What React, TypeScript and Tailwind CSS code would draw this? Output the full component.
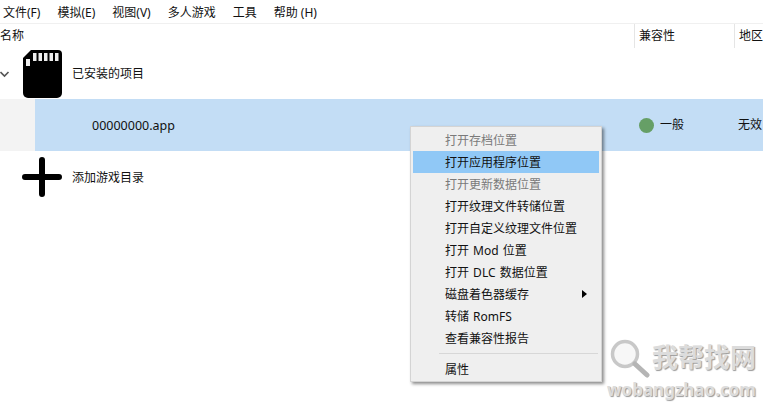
import React from "react";

const font = { fontFamily: '"Noto Sans", "Noto Sans CJK SC", sans-serif' };

function MenuItem({ label, disabled, active, arrow }: { label: string; disabled?: boolean; active?: boolean; arrow?: boolean }) {
  return (
    <div className={`relative mx-[2px] flex h-[22px] items-center pl-[32px] pt-[1px] text-[12px] leading-none [word-spacing:1px] ${disabled ? "text-[#7a7a7a]" : "text-[#111]"} ${active ? "bg-[#90c8f6]" : ""}`}>
      {label}
      {arrow && <span className="absolute left-[169px] top-[7px] h-0 w-0 border-y-[4px] border-l-[5px] border-y-transparent border-l-black" />}
    </div>
  );
}

export default function App() {
  return (
    <div className="relative h-[406px] w-[763px] overflow-hidden bg-white text-[12px] text-[#111]" style={font}>
      <div className="flex h-[24px] items-center gap-[17px] border-b border-[#f0f0f0] pl-[3px] pt-[3px]">
        <span>文件(F)</span>
        <span>模拟(E)</span>
        <span>视图(V)</span>
        <span>多人游戏</span>
        <span>工具</span>
        <span>帮助 (H)</span>
      </div>
      <div className="flex h-[24px] items-center">
        <span className="w-[634px]">名称</span>
        <span className="flex h-full w-[100px] items-center border-l border-[#e5e5e5] pl-[4px]">兼容性</span>
        <span className="flex h-full flex-1 items-center border-l border-[#e5e5e5] pl-[4px]">地区</span>
      </div>
      <div className="flex h-[51px] items-center">
        <svg width="12" height="12" viewBox="0 0 12 12" className="ml-[-1px]" fill="none" stroke="#555" strokeWidth="1.6">
          <path d="M1.5 4l4 4 4-4" />
        </svg>
        <svg width="40" height="48" viewBox="0 0 40 48" className="ml-[11px]">
          <path d="M9 0H36a4 4 0 0 1 4 4V43a5 5 0 0 1-5 5H6a5 5 0 0 1-5-5V8z" fill="#000" />
          <rect x="4" y="9" width="4" height="7" fill="#eee" />
          <rect x="11" y="3" width="3.5" height="8" fill="#eee" />
          <rect x="16.5" y="3" width="3.5" height="8" fill="#eee" />
          <rect x="22" y="3" width="3.5" height="8" fill="#eee" />
          <rect x="27.5" y="3" width="3.5" height="8" fill="#eee" />
          <rect x="33" y="3" width="3.5" height="8" fill="#eee" />
        </svg>
        <span className="ml-[10px]">已安装的项目</span>
      </div>
      <div className="flex h-[52px]">
        <div className="w-[35px] bg-[#f3f3f3]" />
        <div className="flex flex-1 items-center bg-[#c3ddf5]">
          <span className="ml-[57px] w-[543px] pt-[3px] text-[12.5px]">00000000.app</span>
          <span className="ml-[4px] h-[15px] w-[15px] rounded-full bg-[#669f66]" />
          <span className="ml-[6px] w-[78px]">一般</span>
          <span>无效</span>
        </div>
      </div>
      <div className="flex h-[52px] items-center pl-[22px]">
        <svg width="40" height="40" viewBox="0 0 40 40">
          <path d="M20 3V37M3 20H37" stroke="#000" strokeWidth="6" strokeLinecap="round" />
        </svg>
        <span className="ml-[10px] pt-[1px]">添加游戏目录</span>
      </div>

      <div className="absolute left-[410px] top-[126px] h-[256px] w-[192px] border border-[#d4d4d4] bg-[#efefef] pt-[2px] shadow-[2px_2px_3px_rgba(0,0,0,0.45)]">
        <MenuItem label="打开存档位置" disabled />
        <MenuItem label="打开应用程序位置" active />
        <MenuItem label="打开更新数据位置" disabled />
        <MenuItem label="打开纹理文件转储位置" />
        <MenuItem label="打开自定义纹理文件位置" />
        <MenuItem label="打开 Mod 位置" />
        <MenuItem label="打开 DLC 数据位置" />
        <MenuItem label="磁盘着色器缓存" arrow />
        <MenuItem label="转储 RomFS" />
        <MenuItem label="查看兼容性报告" />
        <div className="my-[4px] ml-[28px] mr-[3px] h-px bg-[#d7d7d7]" />
        <MenuItem label="属性" />
      </div>

      <div className="absolute left-[607px] top-[336px] w-[156px]">
        <div className="flex h-[42px] items-center">
          <svg width="44" height="42" viewBox="0 0 44 42" fill="none">
            <circle cx="18" cy="18" r="12.5" fill="#f7f7f7" stroke="#c8c8c8" strokeWidth="3.5" />
            <path d="M28 28L40 39" stroke="#b5b5b5" strokeWidth="5" strokeLinecap="round" />
          </svg>
          <span className="ml-[1px] text-[26px] leading-none font-bold text-[#dcdcdc] [text-shadow:1px_1px_1px_#999]">我帮找网</span>
        </div>
        <div className="mt-[1px] text-[17px] leading-[22px] font-bold text-[#dcdcdc] [text-shadow:1px_1px_1px_#999]">wobangzhao.com</div>
      </div>
    </div>
  );
}
